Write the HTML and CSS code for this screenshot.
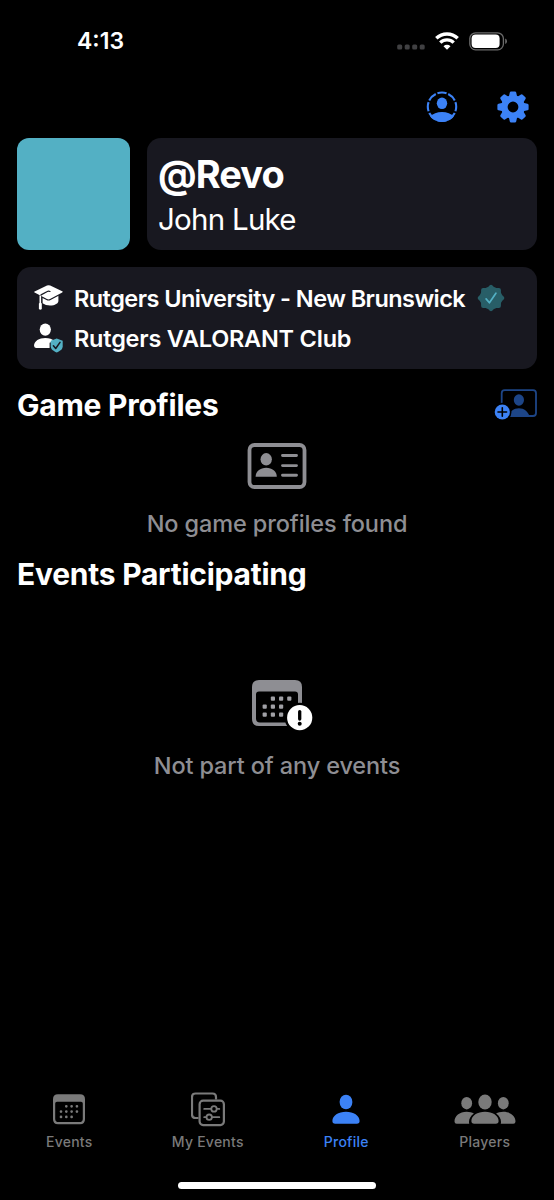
FILE: index.html
```
<!DOCTYPE html>
<html lang="en">
<head>
<meta charset="utf-8">
<meta name="viewport" content="width=device-width, initial-scale=1.0"/>
<title>Profile</title>
<link rel="stylesheet" href="styles.css">
</head>
<body>

    <header class="statusBar">
        <span class="time">4:13</span>
        <div class="statusIcons">
            <svg class="dots" width="28" height="6" viewBox="0 0 28 6" fill="#404042">
                <rect x="0.2" y="0.5" width="5" height="5" rx="1.5"/>
                <rect x="7.7" y="0.5" width="5" height="5" rx="1.5"/>
                <rect x="15.2" y="0.5" width="5" height="5" rx="1.5"/>
                <rect x="22.7" y="0.5" width="5" height="5" rx="1.5"/>
            </svg>
            <svg width="24" height="18" viewBox="0 0 24 18">
                <g fill="none" stroke="#fff" stroke-width="3.4">
                    <path d="M1.3 6.3a15.3 15.3 0 0 1 21.4 0"/>
                    <path d="M5.3 10.6a9.6 9.6 0 0 1 13.4 0"/>
                </g>
                <path d="M12 17.8l-3.5-3.6a5 5 0 0 1 7 0z" fill="#fff"/>
            </svg>
            <svg width="39" height="19" viewBox="0 0 39 19">
                <rect x="0.8" y="0.8" width="33.6" height="17" rx="5.8" fill="none" stroke="#6b6b6b" stroke-width="1.3"/>
                <rect x="2.6" y="2.6" width="28" height="13.4" rx="4" fill="#fff"/>
                <path d="M36.2 6.5v5.6q1.8-.8 1.8-2.8t-1.8-2.8z" fill="#6b6b6b"/>
            </svg>
        </div>
    </header>

    <nav class="toolbar">
        <svg width="32" height="32" viewBox="0 0 32 32">
            <defs><clipPath id="ring"><circle cx="16" cy="15.7" r="15.3"/></clipPath></defs>
            <circle cx="16" cy="15.7" r="14.2" fill="none" stroke="#3c82f6" stroke-width="2.1" pathLength="80" stroke-dasharray="8.4 1.6" stroke-dashoffset="4.2"/>
            <ellipse cx="16" cy="12.3" rx="5.2" ry="5.8" fill="#3c82f6"/>
            <path d="M3.5 26C7 22.4 11 20.9 16 20.9s9 1.5 12.5 5.1V32h-25z" fill="#3c82f6" clip-path="url(#ring)"/>
        </svg>
        <svg width="32" height="32" viewBox="-16 -16 32 32">
            <g fill="#3c82f6">
                <path id="tooth" d="M-4.2-10l1-4.5q.2-1.1 1.3-1.1h3.8q1.1 0 1.3 1.1l1 4.5z"/>
                <use href="#tooth" transform="rotate(45)"/>
                <use href="#tooth" transform="rotate(90)"/>
                <use href="#tooth" transform="rotate(135)"/>
                <use href="#tooth" transform="rotate(180)"/>
                <use href="#tooth" transform="rotate(225)"/>
                <use href="#tooth" transform="rotate(270)"/>
                <use href="#tooth" transform="rotate(315)"/>
            </g>
            <circle r="8.6" fill="none" stroke="#3c82f6" stroke-width="6.4"/>
        </svg>
    </nav>

    <main>
        <section class="identity">
            <div class="avatar"></div>
            <div class="card nameCard">
                <h1>@Revo</h1>
                <p>John Luke</p>
            </div>
        </section>

        <section class="card orgs">
            <div class="org">
                <svg width="30" height="28" viewBox="0 0 30 28">
                    <path d="M8.6 13v6.3q3 2.3 7.4 2.3c5 0 8.4-2.4 8.4-4.6V11z" fill="#fff"/>
                    <path d="M.6 8.6Q-.4 8 .6 7.4L13 1.6q1.6-.7 3.2 0l12 5.6q1.1.6 0 1.2l-12.2 6.6q-1.5.8-3 0z" fill="#fff" stroke="#181820" stroke-width="2.4" paint-order="stroke"/>
                    <path d="M16 7.5q-1.6-.6-2.7.1l-5.8 3q-1.3.7-1.3 2.2" fill="none" stroke="#181820" stroke-width="1.2" stroke-linecap="round"/>
                    <path d="M6.3 11.5v8" fill="none" stroke="#fff" stroke-width="1.6"/>
                    <path d="M4.9 19.6q1.4-1.8 2.9 0v5.5q-1.5 1.5-2.9 0z" fill="#fff"/>
                </svg>
                <span class="school">Rutgers University - New Brunswick</span>
                <svg class="seal" width="28" height="28" viewBox="-14 -14 28 28">
                    <g fill="#285e67">
                        <rect x="-9.9" y="-9.9" width="19.8" height="19.8" rx="2"/>
                        <rect x="-9.9" y="-9.9" width="19.8" height="19.8" rx="2" transform="rotate(45)"/>
                        <circle r="11.2"/>
                    </g>
                    <path d="M-4.9.9l3.3 3.9L4.9-4.8" fill="none" stroke="#53b0c4" stroke-width="1.7" stroke-linecap="round" stroke-linejoin="round"/>
                </svg>
            </div>
            <div class="org">
                <svg width="30" height="30" viewBox="0 0 30 30">
                    <ellipse cx="11.3" cy="6.6" rx="5.6" ry="6.2" fill="#fff"/>
                    <path d="M0 22.5C.3 18 5 15 11.3 15c4 0 7 1.2 9.1 3.1l-4.8 1.6v5.2H2Q0 24.9 0 22.5z" fill="#fff"/>
                    <path d="M22.7 15.4l6 2.3v5.6c0 3-2.5 4.7-6 6.2-3.5-1.5-6-3.2-6-6.2v-5.6z" fill="#53b0c4"/>
                    <path d="M19.4 22.8l2.3 2.7 4.3-6.1" fill="none" stroke="#181820" stroke-width="1.5" stroke-linecap="round" stroke-linejoin="round"/>
                </svg>
                <span>Rutgers VALORANT Club</span>
            </div>
        </section>

        <div class="sectionHead">
            <h2>Game Profiles</h2>
            <svg width="43" height="32" viewBox="-0.7 0 43 32">
                <rect x="7" y="1.2" width="34.3" height="25.8" rx="3" fill="none" stroke="#1d4587" stroke-width="1.8"/>
                <ellipse cx="24.2" cy="11" rx="5.1" ry="5.7" fill="#1d4587"/>
                <path d="M13.5 27.5c1.5-5 5.5-8.3 10.7-8.3s9.2 3.3 10.7 8.3z" fill="#1d4587"/>
                <circle cx="7.6" cy="23" r="9.2" fill="#000"/>
                <circle cx="7.6" cy="23" r="7.6" fill="#3c82f6"/>
                <path d="M3.3 23h8.6M7.6 18.7v8.6" stroke="#000" stroke-width="1.6" stroke-linecap="round"/>
            </svg>
        </div>

        <div class="empty noProfiles">
            <svg width="60" height="46" viewBox="0 0 60 46">
                <rect x="2.5" y="2" width="55" height="42" rx="5" fill="none" stroke="#8e8e93" stroke-width="3.8"/>
                <ellipse cx="19.2" cy="16.3" rx="5.7" ry="6.2" fill="#8e8e93"/>
                <path d="M8.6 33.7c0-5.2 4.7-8.9 10.6-8.9s10.6 3.7 10.6 8.9z" fill="#8e8e93"/>
                <path d="M35.5 12.5h14M35.5 22.6h14M35.5 32.3h14" stroke="#8e8e93" stroke-width="2.9" stroke-linecap="round"/>
            </svg>
            <p>No game profiles found</p>
        </div>

        <div class="sectionHead events">
            <h2>Events Participating</h2>
        </div>

        <div class="empty noEvents">
            <svg width="62" height="52" viewBox="0 0 62 52">
                <path fill-rule="evenodd" d="M7 0h36q7 0 7 7v32q0 7-7 7H7q-7 0-7-7V7q0-7 7-7zM7 11.5q-3 0-3 3v24q0 4 4 4h34q4 0 4-4v-24q0-3-3-3z" fill="#8e8e93"/>
                <g fill="#a0a0a5">
                    <rect x="18.8" y="16.5" width="4.2" height="4.2" rx="1"/>
                    <rect x="27" y="16.5" width="4.2" height="4.2" rx="1"/>
                    <rect x="35.2" y="16.5" width="4.2" height="4.2" rx="1"/>
                    <rect x="10.6" y="24.5" width="4.2" height="4.2" rx="1"/>
                    <rect x="18.8" y="24.5" width="4.2" height="4.2" rx="1"/>
                    <rect x="27" y="24.5" width="4.2" height="4.2" rx="1"/>
                    <rect x="10.6" y="32.5" width="4.2" height="4.2" rx="1"/>
                    <rect x="18.8" y="32.5" width="4.2" height="4.2" rx="1"/>
                    <rect x="27" y="32.5" width="4.2" height="4.2" rx="1"/>
                </g>
                <circle cx="47.7" cy="37.7" r="15" fill="#000"/>
                <circle cx="47.7" cy="37.7" r="12.6" fill="#fff"/>
                <path d="M47.7 31.6v7.4" stroke="#000" stroke-width="3.3" stroke-linecap="round"/>
                <circle cx="47.7" cy="43.7" r="2" fill="#000"/>
            </svg>
            <p>Not part of any events</p>
        </div>
    </main>

    <footer class="tabBar">
        <div class="tab">
            <svg width="32" height="36" viewBox="0 0 32 36">
                <path fill-rule="evenodd" d="M5 3.3h22q5 0 5 5v20q0 5-5 5H5q-5 0-5-5v-20q0-5 5-5zM4 10.8q-1.8 0-1.8 1.8V27.7q0 3.4 3.4 3.4h20.8q3.4 0 3.4-3.4V12.6q0-1.8-1.8-1.8z" fill="#7a7a7a"/>
                <g fill="none" stroke="#7a7a7a" stroke-width="2.7" stroke-linecap="round" stroke-dasharray="0.01 5.3">
                    <path d="M13.3 15.3H24.5"/>
                    <path d="M8 20.6H24.5"/>
                    <path d="M8 25.9H19"/>
                </g>
            </svg>
            <span>Events</span>
        </div>
        <div class="tab">
            <svg width="34" height="36" viewBox="0 0 34 36" fill="none" stroke="#7a7a7a" stroke-width="2.2">
                <path d="M7.5 27H4.5Q1 27 1 23.5V6q0-3.5 3.5-3.5h17Q25 2.5 25 6V8.5"/>
                <rect x="8.6" y="9.7" width="24.3" height="24.4" rx="3.5"/>
                <g stroke-width="1.8" stroke-linecap="round">
                    <path d="M13.2 17.9h6.7M26.1 17.9h2.2M13.2 26.2h2M21.3 26.2h7"/>
                    <circle cx="23" cy="17.9" r="2.7"/>
                    <circle cx="18.2" cy="26.2" r="2.7"/>
                </g>
            </svg>
            <span>My Events</span>
        </div>
        <div class="tab active">
            <svg width="28" height="36" viewBox="0 0 28 36" fill="#3c82f6">
                <ellipse cx="14" cy="11" rx="6.4" ry="7.3"/>
                <path d="M.4 30.1C.4 24.6 6.5 20.8 14 20.8s13.6 3.8 13.6 9.3q0 2.7-2.8 2.7H3.2q-2.8 0-2.8-2.7z"/>
            </svg>
            <span>Profile</span>
        </div>
        <div class="tab">
            <svg width="62" height="36" viewBox="0 -0.6 62 36" fill="#7a7a7a">
                <ellipse cx="12.7" cy="11.6" rx="5.4" ry="6.2"/>
                <ellipse cx="49.3" cy="11.6" rx="5.4" ry="6.2"/>
                <path id="side" d="M.5 30c0-5.5 5-9.8 12.2-9.8 2.9 0 5.3.7 7.2 1.8-3.2 2.3-4.9 5.3-4.9 8.3 0 .8.1 1.4.3 1.9H2.7Q.5 32.2.5 30z"/>
                <use href="#side" transform="matrix(-1 0 0 1 62 0)"/>
                <ellipse cx="31" cy="10.4" rx="6.7" ry="7.4"/>
                <path d="M17.4 29.5C17.4 24 23.5 20.2 31 20.2s13.6 3.8 13.6 9.3q0 2.7-2.8 2.7H20.2q-2.8 0-2.8-2.7z"/>
            </svg>
            <span>Players</span>
        </div>
    </footer>
    <div class="homeIndicator"></div>

</body>
</html>
```
FILE: styles.css
```
* {
    box-sizing: border-box;
}

body {
    margin: 0;
    width: 554px;
    height: 1200px;
    display: flex;
    flex-direction: column;
    background: #000;
    color: #fff;
    font-family: Inter, "Liberation Sans", sans-serif;
    overflow: hidden;
}

svg {
    display: block;
    flex: none;
}

h1, h2, p {
    margin: 0;
}

span, h1, h2, p {
    white-space: nowrap;
}

.statusBar {
    display: flex;
    justify-content: space-between;
    align-items: center;
    height: 82px;
    padding: 0 46px 0 77px;
}

.time {
    font-size: 23px;
    font-weight: 600;
}

.statusIcons {
    display: flex;
    align-items: center;
    gap: 10px;
}

.dots {
    margin-top: 12px;
}

.toolbar {
    display: flex;
    justify-content: flex-end;
    gap: 39px;
    height: 56px;
    padding: 9px 25px 0 0;
}

main {
    flex: 1;
    padding: 0 17px;
}

.identity {
    display: flex;
    gap: 17px;
    height: 112px;
}

.avatar {
    width: 113px;
    border-radius: 12px;
    background: #53b0c4;
}

.card {
    background: #181820;
    border-radius: 14px;
}

.nameCard {
    flex: 1;
    padding: 12px 11px;
}

.nameCard h1 {
    font-size: 38px;
    line-height: 48px;
    font-weight: 700;
    letter-spacing: -0.9px;
}

.nameCard p {
    font-size: 29.5px;
    line-height: 42px;
    font-weight: 400;
    letter-spacing: -0.75px;
}

.orgs {
    height: 102px;
    margin-top: 17px;
    padding: 11px 17px;
}

.org {
    display: flex;
    align-items: center;
    gap: 10px;
    height: 40px;
    font-size: 23.5px;
    font-weight: 600;
    letter-spacing: -0.22px;
}

.org .school {
    letter-spacing: -0.55px;
}

.seal {
    margin-left: 2px;
}

.sectionHead {
    display: flex;
    justify-content: space-between;
    align-items: center;
    height: 36px;
    margin-top: 18px;
}

.sectionHead h2 {
    font-size: 30px;
    font-weight: 700;
    letter-spacing: -0.25px;
}

.empty {
    display: flex;
    flex-direction: column;
    align-items: center;
    color: #8e8e93;
    font-size: 23.5px;
    line-height: 30px;
    font-weight: 500;
    letter-spacing: -0.12px;
}

.noProfiles {
    padding-top: 20px;
    gap: 20px;
}

.events {
    margin-top: 17px;
}

.noEvents {
    padding-top: 88px;
    gap: 19px;
}

.noEvents svg {
    margin-left: 12px;
}

.tabBar {
    display: grid;
    grid-template-columns: repeat(4, 138.5px);
    height: 91px;
}

.tab {
    display: flex;
    flex-direction: column;
    align-items: center;
    gap: 5px;
    color: #7a7a7a;
    font-size: 14px;
    line-height: 20px;
    letter-spacing: 0.25px;
    font-weight: 500;
}

.active {
    color: #3c82f6;
}

.homeIndicator {
    width: 198px;
    height: 7px;
    margin: 0 auto 11px;
    border-radius: 4px;
    background: #fff;
}
```
